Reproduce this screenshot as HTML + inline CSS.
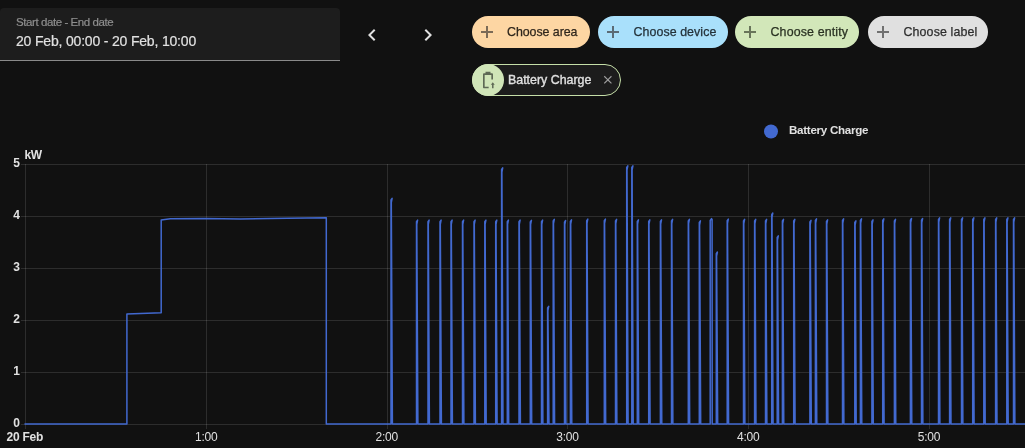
<!DOCTYPE html>
<html><head><meta charset="utf-8">
<style>
html,body{margin:0;padding:0;}
body{width:1025px;height:448px;background:#111111;position:relative;overflow:hidden;font-family:"Liberation Sans",sans-serif;}
#wrap{position:absolute;left:0;top:0;width:1025px;height:448px;will-change:transform;}
.abs{position:absolute;}
.picker{position:absolute;left:0;top:8px;width:340px;height:53px;background:#1d1d1d;border-radius:4px 4px 0 0;box-sizing:border-box;border-bottom:1px solid #8a8a8a;}
.plabel{position:absolute;left:16px;top:7px;font-size:11.5px;letter-spacing:-0.42px;-webkit-text-stroke:0.2px #8e8e8e;color:#8e8e8e;line-height:14px;white-space:nowrap;}
.pvalue{position:absolute;left:16px;top:25px;font-size:14px;letter-spacing:-0.18px;color:#e1e1e1;-webkit-text-stroke:0.2px #e1e1e1;line-height:16px;white-space:nowrap;}
.chip{position:absolute;top:16px;height:32px;border-radius:16px;}
.chip .plus{position:absolute;left:9px;top:10px;width:12px;height:12px;}
.chip .plus:before{content:"";position:absolute;left:5px;top:0;width:2px;height:12px;background:currentColor;}
.chip .plus:after{content:"";position:absolute;left:0;top:5px;width:12px;height:2px;background:currentColor;}
.chip .t{position:absolute;top:9px;font-size:12.4px;line-height:14px;white-space:nowrap;letter-spacing:-0.05px;-webkit-text-stroke:0.25px currentColor;}
.yl{position:absolute;left:0;width:20px;text-align:right;font-size:12px;line-height:14px;color:#e1e1e1;font-weight:bold;}
.xl{position:absolute;top:430px;width:60px;text-align:center;font-size:12px;letter-spacing:-0.2px;line-height:14px;color:#e1e1e1;}
</style></head><body><div id="wrap">
<div class="picker">
  <div class="plabel">Start date - End date</div>
  <div class="pvalue">20 Feb, 00:00 - 20 Feb, 10:00</div>
</div>
<svg class="abs" style="left:0;top:0" width="1025" height="448" viewBox="0 0 1025 448">
  <path d="M15.41,16.58L10.83,12L15.41,7.41L14,6L8,12L14,18L15.41,16.58Z" fill="#e1e1e1" transform="translate(360,23)"/>
  <path d="M8.59,16.58L13.17,12L8.59,7.41L10,6L16,12L10,18L8.59,16.58Z" fill="#e1e1e1" transform="translate(416,23)"/>
</svg>
<div class="chip" style="left:472px;width:118px;background:#fdd6a3;color:#7b6a56;"><div class="plus"></div><div class="t" style="left:35px;color:#2e261c">Choose area</div></div>
<div class="chip" style="left:598px;width:130px;background:#a9e0fb;color:#5b6b75;"><div class="plus"></div><div class="t" style="left:35.5px;letter-spacing:0.07px;color:#24323a">Choose device</div></div>
<div class="chip" style="left:735px;width:124px;background:#d2e7b9;color:#68745a;"><div class="plus"></div><div class="t" style="left:35.5px;letter-spacing:0.15px;color:#2a3222">Choose entity</div></div>
<div class="chip" style="left:868px;width:120px;background:#e0e0e0;color:#707070;"><div class="plus"></div><div class="t" style="left:35.5px;letter-spacing:0.13px;color:#2e2e2e">Choose label</div></div>

<div class="abs" style="left:472px;top:64px;width:149px;height:32px;box-sizing:border-box;border:1px solid #c5dea8;border-radius:16px;background:#1c1c1c;"></div>
<div class="abs" style="left:472px;top:64px;width:32px;height:32px;border-radius:16px;background:#d0e5b8;"></div>
<svg class="abs" style="left:478px;top:70px" width="20" height="20" viewBox="0 0 24 24">
  <path d="M9,2H15V4H16.67C17.4,4 18,4.6 18,5.33V11.3H16V6H8V20H12.8V22H7.33C6.6,22 6,21.4 6,20.67V5.33C6,4.6 6.6,4 7.33,4H9Z" fill="#5e6955"/>
  <path d="M16.85,22V17.6H15.4L17.75,14.8L20.1,17.6H18.65V22Z" fill="#5e6955"/>
</svg>
<div class="abs" style="left:508px;top:73px;font-size:12.4px;line-height:14px;-webkit-text-stroke:0.35px #e1e1e1;color:#e1e1e1;white-space:nowrap;">Battery Charge</div>
<svg class="abs" style="left:601.14px;top:73.14px" width="13.71" height="13.71" viewBox="0 0 24 24"><path d="M19,6.41L17.59,5L12,10.59L6.41,5L5,6.41L10.59,12L5,17.59L6.41,19L12,13.41L17.59,19L19,17.59L13.41,12L19,6.41Z" fill="#9e9e9e"/></svg>

<svg class="abs" style="left:0;top:0" width="1025" height="448" viewBox="0 0 1025 448">
  <g stroke="rgba(255,255,255,0.12)" stroke-width="1" shape-rendering="crispEdges">
  <line x1="21" y1="164.5" x2="1025" y2="164.5"/>
<line x1="21" y1="216.5" x2="1025" y2="216.5"/>
<line x1="21" y1="268.5" x2="1025" y2="268.5"/>
<line x1="21" y1="320.5" x2="1025" y2="320.5"/>
<line x1="21" y1="372.5" x2="1025" y2="372.5"/>
<line x1="21" y1="424.5" x2="1025" y2="424.5"/>
<line x1="206.5" y1="164" x2="206.5" y2="429"/>
<line x1="387.5" y1="164" x2="387.5" y2="429"/>
<line x1="567.5" y1="164" x2="567.5" y2="429"/>
<line x1="748.5" y1="164" x2="748.5" y2="429"/>
<line x1="929.5" y1="164" x2="929.5" y2="429"/>
  </g>
  <line x1="25.5" y1="164" x2="25.5" y2="429" stroke="rgba(255,255,255,0.12)" stroke-width="1" shape-rendering="crispEdges"/>
  <circle cx="771" cy="131.5" r="7" fill="#4269d0"/>
  <path d="M25.0,424.0 L126.9,424.0 L126.9,314.0 L161.2,312.8 L161.2,220.0 L170.3,218.7 L205.0,218.4 L240.5,218.9 L287.4,218.2 L326.3,217.7 L326.3,424.0 L391.0,424.0 L391.0,199.9 L392.1,198.3 L391.3,202.5 L392.4,424.0 L416.5,424.0 L416.5,221.7 L417.6,220.1 L416.8,224.3 L417.9,424.0 L428.0,424.0 L428.0,221.7 L429.1,220.1 L428.3,224.3 L429.4,424.0 L440.0,424.0 L440.0,221.7 L441.1,220.1 L440.3,224.3 L441.4,424.0 L451.0,424.0 L451.0,221.7 L452.1,220.1 L451.3,224.3 L452.4,424.0 L462.5,424.0 L462.5,221.7 L463.6,220.1 L462.8,224.3 L463.9,424.0 L474.0,424.0 L474.0,221.7 L475.1,220.1 L474.3,224.3 L475.4,424.0 L484.8,424.0 L484.8,221.7 L485.9,220.1 L485.1,224.3 L486.2,424.0 L495.7,424.0 L495.7,221.7 L496.8,220.1 L496.0,224.3 L497.1,424.0 L501.6,424.0 L501.6,169.4 L502.7,167.8 L501.9,172.0 L503.0,424.0 L507.3,424.0 L507.3,221.7 L508.4,220.1 L507.6,224.3 L508.7,424.0 L519.0,424.0 L519.0,221.7 L520.1,220.1 L519.3,224.3 L520.4,424.0 L530.3,424.0 L530.3,221.9 L531.4,220.3 L530.6,224.5 L531.7,424.0 L541.5,424.0 L541.5,221.7 L542.6,220.1 L541.8,224.3 L542.9,424.0 L547.6,424.0 L547.6,308.0 L548.7,306.4 L547.9,310.6 L549.0,424.0 L553.2,424.0 L553.2,220.9 L554.3,219.3 L553.5,223.5 L554.6,424.0 L564.5,424.0 L564.5,222.1 L565.6,220.5 L564.8,224.7 L565.9,424.0 L570.4,424.0 L570.4,221.4 L571.5,219.8 L570.7,224.0 L571.8,424.0 L586.7,424.0 L586.7,220.7 L587.8,219.1 L587.0,223.3 L588.1,424.0 L604.3,424.0 L604.3,220.7 L605.4,219.1 L604.6,223.3 L605.7,424.0 L615.5,424.0 L615.5,220.9 L616.6,219.3 L615.8,223.5 L616.9,424.0 L626.7,424.0 L626.7,167.4 L627.8,165.8 L627.0,170.0 L628.1,424.0 L631.8,424.0 L631.8,167.4 L632.9,165.8 L632.1,170.0 L633.2,424.0 L637.3,424.0 L637.3,221.4 L638.4,219.8 L637.6,224.0 L638.7,424.0 L648.7,424.0 L648.7,221.4 L649.8,219.8 L649.0,224.0 L650.1,424.0 L660.4,424.0 L660.4,221.4 L661.5,219.8 L660.7,224.0 L661.8,424.0 L671.5,424.0 L671.5,220.9 L672.6,219.3 L671.8,223.5 L672.9,424.0 L688.3,424.0 L688.3,220.9 L689.4,219.3 L688.6,223.5 L689.7,424.0 L699.3,424.0 L699.3,222.4 L700.4,220.8 L699.6,225.0 L700.7,424.0 L710.2,424.0 L710.2,220.5 L711.5,218.6 L712.1,219.5 L712.2,424.0 L716.3,424.0 L716.3,253.6 L717.4,252.0 L716.6,256.2 L717.7,424.0 L727.2,424.0 L727.2,220.7 L728.3,219.1 L727.5,223.3 L728.6,424.0 L743.5,424.0 L743.5,220.9 L744.6,219.3 L743.8,223.5 L744.9,424.0 L754.6,424.0 L754.6,220.9 L755.7,219.3 L754.9,223.5 L756.0,424.0 L765.5,424.0 L765.5,220.9 L766.6,219.3 L765.8,223.5 L766.9,424.0 L771.7,424.0 L771.7,214.6 L772.8,213.0 L772.0,217.2 L773.1,424.0 L777.2,424.0 L777.2,237.4 L778.3,235.8 L777.5,240.0 L778.6,424.0 L782.4,424.0 L782.4,220.9 L783.5,219.3 L782.7,223.5 L783.8,424.0 L793.7,424.0 L793.7,220.9 L794.8,219.3 L794.0,223.5 L795.1,424.0 L809.9,424.0 L809.9,221.9 L811.0,220.3 L810.2,224.5 L811.3,424.0 L815.4,424.0 L815.4,220.4 L816.5,218.8 L815.7,223.0 L816.8,424.0 L826.5,424.0 L826.5,221.4 L827.6,219.8 L826.8,224.0 L827.9,424.0 L842.5,424.0 L842.5,220.4 L843.6,218.8 L842.8,223.0 L843.9,424.0 L854.8,424.0 L854.8,222.4 L855.9,220.8 L855.1,225.0 L856.2,424.0 L860.4,424.0 L860.4,220.4 L861.5,218.8 L860.7,223.0 L861.8,424.0 L871.9,424.0 L871.9,221.4 L873.0,219.8 L872.2,224.0 L873.3,424.0 L882.7,424.0 L882.7,220.4 L883.8,218.8 L883.0,223.0 L884.1,424.0 L894.4,424.0 L894.4,220.9 L895.5,219.3 L894.7,223.5 L895.8,424.0 L910.4,424.0 L910.4,220.1 L911.5,218.5 L910.7,222.7 L911.8,424.0 L921.5,424.0 L921.5,220.1 L922.6,218.5 L921.8,222.7 L922.9,424.0 L938.5,424.0 L938.5,219.4 L939.6,217.8 L938.8,222.0 L939.9,424.0 L949.6,424.0 L949.6,219.4 L950.7,217.8 L949.9,222.0 L951.0,424.0 L961.5,424.0 L961.5,219.4 L962.6,217.8 L961.8,222.0 L962.9,424.0 L972.7,424.0 L972.7,219.4 L973.8,217.8 L973.0,222.0 L974.1,424.0 L983.8,424.0 L983.8,219.4 L984.9,217.8 L984.1,222.0 L985.2,424.0 L995.6,424.0 L995.6,219.4 L996.7,217.8 L995.9,222.0 L997.0,424.0 L1006.8,424.0 L1006.8,219.4 L1007.9,217.8 L1007.1,222.0 L1008.2,424.0 L1013.5,424.0 L1013.5,219.4 L1014.6,217.8 L1013.8,222.0 L1014.9,424.0 L1026.0,424.0" fill="none" stroke="#4269d0" stroke-width="1.5" stroke-linejoin="round" stroke-linecap="round"/>
</svg>
<div class="abs" style="left:789px;top:123px;font-size:11.6px;letter-spacing:-0.28px;line-height:14px;font-weight:bold;color:#e1e1e1;white-space:nowrap;">Battery Charge</div>
<div class="abs" style="left:24.5px;top:148px;font-size:12px;letter-spacing:-0.3px;line-height:14px;font-weight:bold;color:#e1e1e1;">kW</div>
<div class="yl" style="top:416px">0</div><div class="yl" style="top:364px">1</div><div class="yl" style="top:312px">2</div><div class="yl" style="top:260px">3</div><div class="yl" style="top:208px">4</div><div class="yl" style="top:156px">5</div>
<div class="abs" style="left:6.5px;top:430px;font-size:12px;letter-spacing:-0.25px;line-height:14px;font-weight:bold;color:#e1e1e1;white-space:nowrap;">20 Feb</div>
<div class="xl" style="left:176.2px">1:00</div><div class="xl" style="left:356.8px">2:00</div><div class="xl" style="left:537.5px">3:00</div><div class="xl" style="left:718.2px">4:00</div><div class="xl" style="left:899px">5:00</div>
</div></body></html>
